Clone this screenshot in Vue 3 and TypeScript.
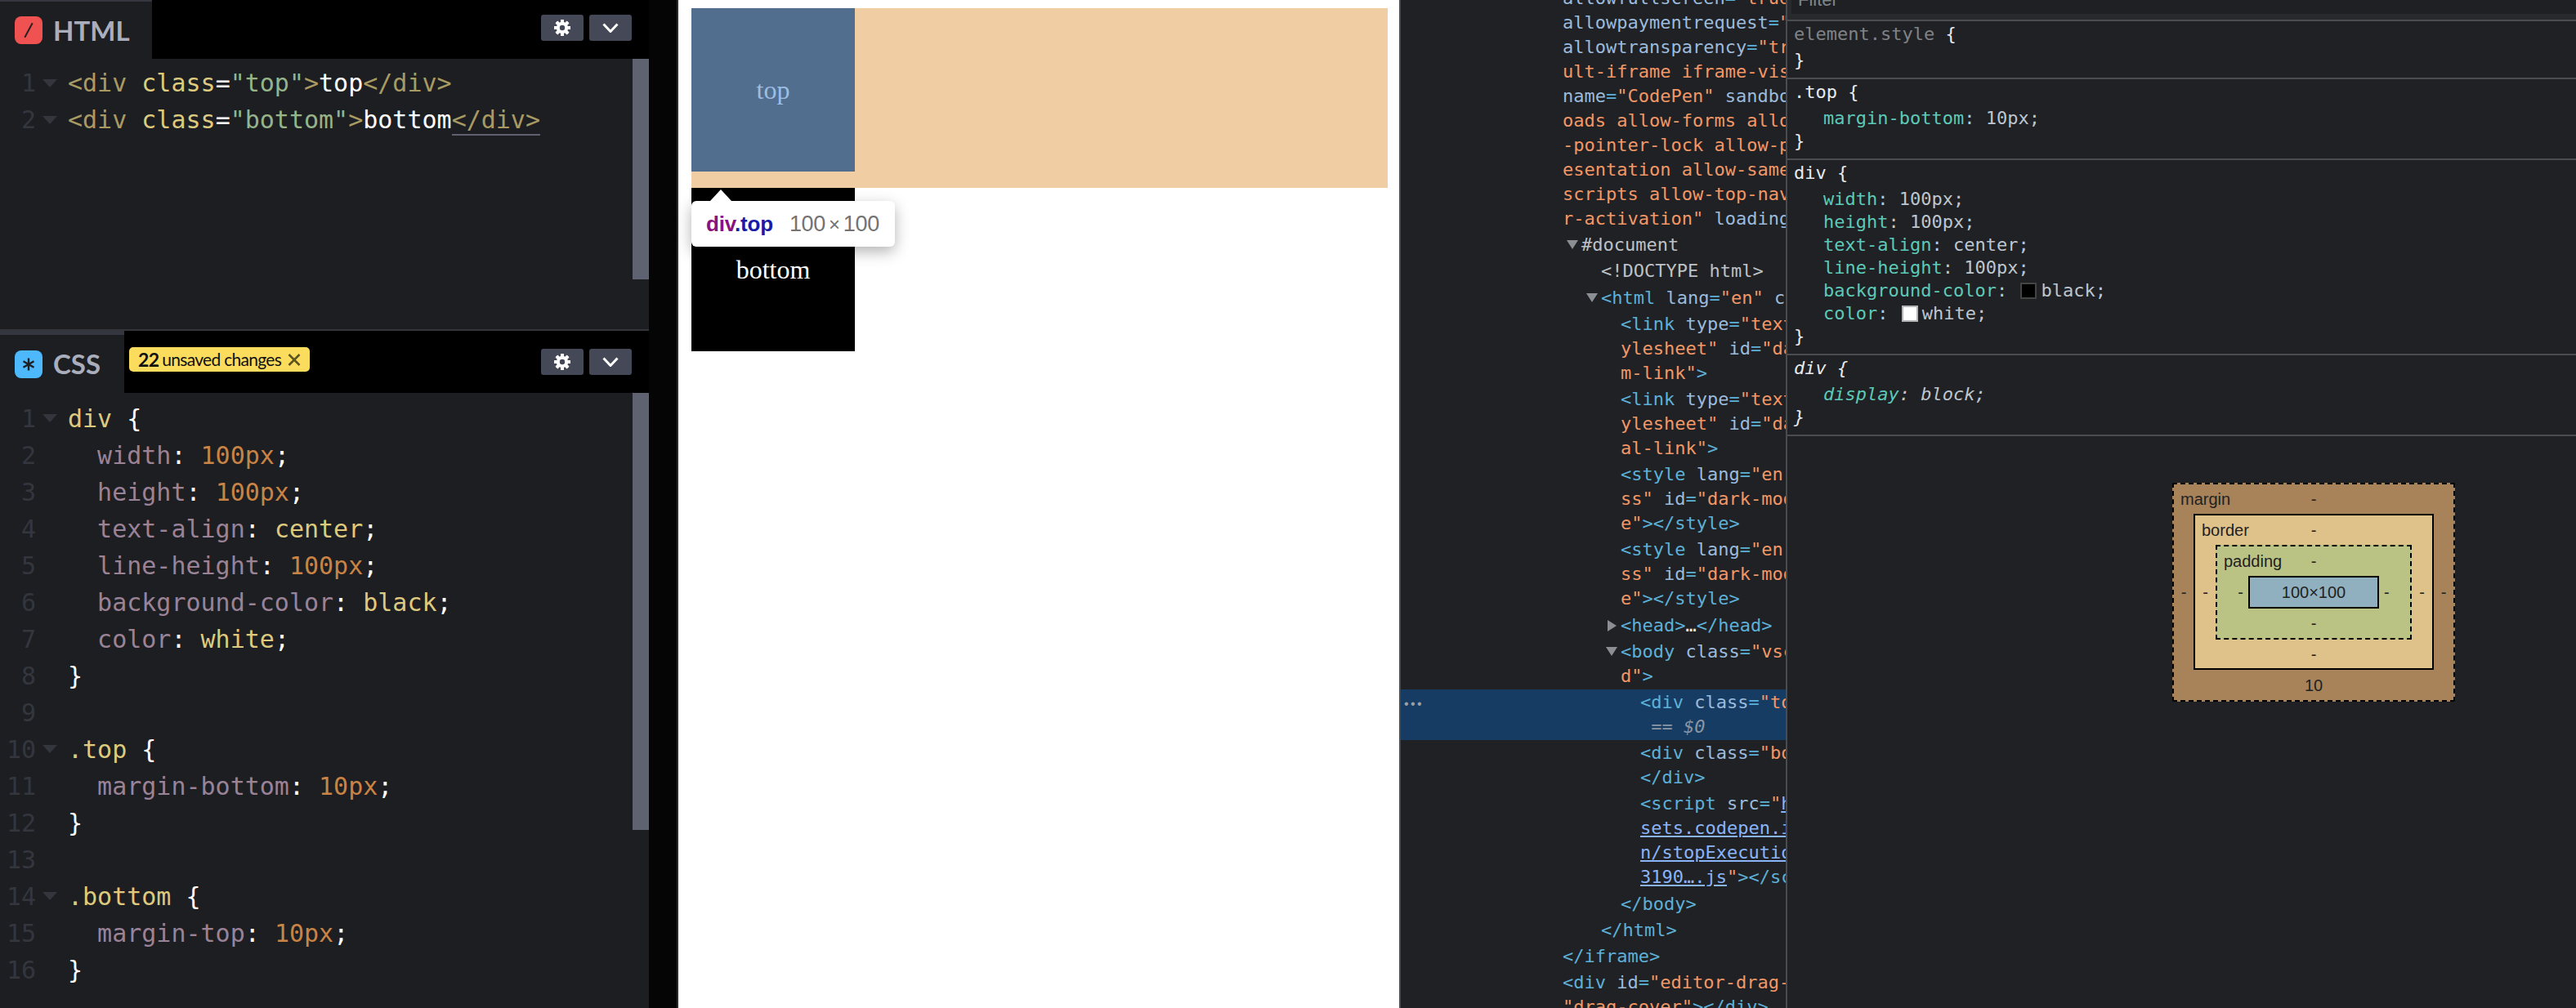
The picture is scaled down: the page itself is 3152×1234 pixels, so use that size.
<script setup lang="ts">
type Seg = { c: string; t: string }
const parse = (s: string): Seg[] => s.split('§').map((p) => ({ c: p[0], t: p.slice(1) }))

type CodeLine = { n: number; fold: boolean; segs: Seg[] }
const code = (rows: [boolean, string][]): CodeLine[] =>
  rows.map(([fold, s], i) => ({ n: i + 1, fold, segs: s ? parse(s) : [] }))

const htmlLines = code([
  [true, 't<div§w §aclass§w=§s"top"§t>§wtop§t</div>'],
  [true, 't<div§w §aclass§w=§s"bottom"§t>§wbottom§u</div>'],
])

const cssLines = code([
  [true, 'kdiv§w {'],
  [false, 'p  width§w: §n100px§w;'],
  [false, 'p  height§w: §n100px§w;'],
  [false, 'p  text-align§w: §kcenter§w;'],
  [false, 'p  line-height§w: §n100px§w;'],
  [false, 'p  background-color§w: §kblack§w;'],
  [false, 'p  color§w: §kwhite§w;'],
  [false, 'w}'],
  [false, ''],
  [true, 'k.top§w {'],
  [false, 'p  margin-bottom§w: §n10px§w;'],
  [false, 'w}'],
  [false, ''],
  [true, 'k.bottom§w {'],
  [false, 'p  margin-top§w: §n10px§w;'],
  [false, 'w}'],
])

const gearAngles = [0, 45, 90, 135, 180, 225, 270, 315]

type DomRow = { x: number; arrow?: 'down' | 'right'; sel?: boolean; lines: Seg[][] }
const row = (x: number, lines: string[], arrow?: 'down' | 'right', sel?: boolean): DomRow => ({
  x,
  arrow,
  sel,
  lines: lines.map(parse),
})

const domRows: DomRow[] = [
  row(1913, [
    'aallowfullscreen§b=§v"true',
    'aallowpaymentrequest§b=§v"',
    'aallowtransparency§b=§v"tr',
    'vult-iframe iframe-vis',
    'aname§b=§v"CodePen"§a sandbo',
    'voads allow-forms allo',
    'v-pointer-lock allow-p',
    'vesentation allow-same',
    'vscripts allow-top-nav',
    'vr-activation"§a loading',
  ]),
  row(1936, ['g#document'], 'down'),
  row(1960, ['d<!DOCTYPE html>']),
  row(1960, ['b<html§a lang§b=§v"en"§a c'], 'down'),
  row(1984, ['b<link§a type§b=§v"text', 'vylesheet"§a id§b=§v"da', 'vm-link"§b>']),
  row(1984, ['b<link§a type§b=§v"text', 'vylesheet"§a id§b=§v"da', 'val-link"§b>']),
  row(1984, ['b<style§a lang§b=§v"en"', 'vss"§a id§b=§v"dark-mod', 've"§b></style>']),
  row(1984, ['b<style§a lang§b=§v"en"', 'vss"§a id§b=§v"dark-mod', 've"§b></style>']),
  row(1984, ['b<head>§w…§b</head>'], 'right'),
  row(1984, ['b<body§a class§b=§v"vsc', 'vd"§b>'], 'down'),
  row(2008, ['b<div§a class§b=§v"to', 'm == §i$0'], undefined, true),
  row(2008, ['b<div§a class§b=§v"bo', 'b</div>']),
  row(2008, ['b<script§a src§b=§v"§lh', 'lsets.codepen.i', 'ln/stopExecutio', 'l3190….js§v"§b></sc']),
  row(1984, ['b</body>']),
  row(1960, ['b</html>']),
  row(1913, ['b</iframe>']),
  row(1913, ['b<div§a id§b=§v"editor-drag-', 'v"drag-cover"§b></div>']),
]
</script>

<template>
  <div class="page">
    <section class="editors">
      <div class="panel panel-html">
        <header class="head">
          <div class="tab tab-html">
            <span class="logo logo-html"><i class="slash"></i></span>
            <span class="tab-name">HTML</span>
          </div>
          <div class="actions">
            <button class="btn btn-gear" type="button">
              <svg width="20" height="20" viewBox="0 0 20 20">
                <rect v-for="a in gearAngles" :key="a" x="8" y="0" width="4" height="20" rx="0.6" fill="#fff" :transform="`rotate(${a} 10 10)`" />
                <circle cx="10" cy="10" r="7.2" fill="#fff" />
                <circle cx="10" cy="10" r="3.2" fill="#444857" />
              </svg>
            </button>
            <button class="btn btn-down" type="button">
              <svg width="20" height="12" viewBox="0 0 20 12"><path d="M1.5 1.5 10 10.5 18.5 1.5" fill="none" stroke="#fff" stroke-width="3" /></svg>
            </button>
          </div>
        </header>
        <div class="code">
          <div v-for="l in htmlLines" :key="l.n" class="line">
            <span class="gutter">{{ l.n }}</span>
            <span class="fold"><i v-if="l.fold" class="fold-mark"></i></span>
            <span class="src"><span v-for="(s, i) in l.segs" :key="i" :class="'c-' + s.c">{{ s.t }}</span></span>
          </div>
          <div class="scroll scroll-html"></div>
        </div>
      </div>

      <div class="panel panel-css">
        <header class="head">
          <div class="tab tab-css">
            <span class="logo logo-css">
              <svg width="18" height="18" viewBox="0 0 18 18"><path d="M9 1.5v15M2.5 5.2l13 7.6M15.5 5.2l-13 7.6" fill="none" stroke="#1d1e22" stroke-width="2.4" /></svg>
            </span>
            <span class="tab-name">CSS</span>
          </div>
          <div class="badge">
            <b>22</b><span>unsaved changes</span>
            <svg width="16" height="15" viewBox="0 0 16 15"><path d="M1.5 1 14.5 14M14.5 1 1.5 14" fill="none" stroke="#5d5320" stroke-width="2.5" /></svg>
          </div>
          <div class="actions">
            <button class="btn btn-gear" type="button">
              <svg width="20" height="20" viewBox="0 0 20 20">
                <rect v-for="a in gearAngles" :key="a" x="8" y="0" width="4" height="20" rx="0.6" fill="#fff" :transform="`rotate(${a} 10 10)`" />
                <circle cx="10" cy="10" r="7.2" fill="#fff" />
                <circle cx="10" cy="10" r="3.2" fill="#444857" />
              </svg>
            </button>
            <button class="btn btn-down" type="button">
              <svg width="20" height="12" viewBox="0 0 20 12"><path d="M1.5 1.5 10 10.5 18.5 1.5" fill="none" stroke="#fff" stroke-width="3" /></svg>
            </button>
          </div>
        </header>
        <div class="code">
          <div v-for="l in cssLines" :key="l.n" class="line">
            <span class="gutter">{{ l.n }}</span>
            <span class="fold"><i v-if="l.fold" class="fold-mark"></i></span>
            <span class="src"><span v-for="(s, i) in l.segs" :key="i" :class="'c-' + s.c">{{ s.t }}</span></span>
          </div>
          <div class="scroll scroll-css"></div>
        </div>
      </div>
    </section>

    <div class="gap"></div>

    <section class="preview">
      <div class="stage">
        <div class="box box-top-wrap">
          <div class="box box-top">top</div>
        </div>
        <div class="box box-bottom">bottom</div>
        <div class="tip">
          <i class="tip-arrow"></i>
          <span class="tip-name"><span class="tip-tag">div</span><span class="tip-cls">.top</span></span>
          <span class="tip-size">100<span class="tip-x">×</span>100</span>
        </div>
      </div>
    </section>

    <section class="dom">
      <div class="dom-inner">
        <div
          v-for="(r, ri) in domRows"
          :key="ri"
          class="dom-row"
          :class="{ selected: r.sel }"
          :style="{ paddingLeft: r.x - 1715 + 'px' }"
        >
          <span v-if="r.sel" class="dots">•••</span>
          <i v-if="r.arrow" class="arrow" :class="'arrow-' + r.arrow"></i>
          <div v-for="(l, li) in r.lines" :key="li" class="dom-line">
            <span v-for="(s, i) in l" :key="i" :class="'d-' + s.c">{{ s.t }}</span>
          </div>
        </div>
      </div>
    </section>

    <aside class="styles">
      <div class="filter-bar"><div class="filter-input">Filter</div></div>

      <div class="rule">
        <div class="sel muted">element.style <span class="brace">{</span></div>
        <div class="brace-end">}</div>
      </div>
      <div class="rule">
        <div class="sel">.top {</div>
        <div class="decl"><span class="prop">margin-bottom</span>: 10px;</div>
        <div class="brace-end">}</div>
      </div>
      <div class="rule">
        <div class="sel">div {</div>
        <div class="decl"><span class="prop">width</span>: 100px;</div>
        <div class="decl"><span class="prop">height</span>: 100px;</div>
        <div class="decl"><span class="prop">text-align</span>: center;</div>
        <div class="decl"><span class="prop">line-height</span>: 100px;</div>
        <div class="decl"><span class="prop">background-color</span>: <i class="swatch swatch-black"></i>black;</div>
        <div class="decl"><span class="prop">color</span>: <i class="swatch swatch-white"></i>white;</div>
        <div class="brace-end">}</div>
      </div>
      <div class="rule ua">
        <div class="sel">div {</div>
        <div class="decl"><span class="prop">display</span>: block;</div>
        <div class="brace-end">}</div>
      </div>

      <div class="bm bm-margin">
        <span class="bm-label">margin</span><span class="bm-top">-</span>
        <span class="bm-left">-</span>
        <div class="bm bm-border">
          <span class="bm-label">border</span><span class="bm-top">-</span>
          <span class="bm-left">-</span>
          <div class="bm bm-padding">
            <span class="bm-label">padding</span><span class="bm-top">-</span>
            <span class="bm-left">-</span>
            <div class="bm-content">100×100</div>
            <span class="bm-right">-</span>
            <span class="bm-bottom">-</span>
          </div>
          <span class="bm-right">-</span>
          <span class="bm-bottom">-</span>
        </div>
        <span class="bm-right">-</span>
        <span class="bm-bottom">10</span>
      </div>
    </aside>
  </div>
</template>

<style scoped>
.page {
  display: flex;
  width: 3152px;
  height: 1234px;
  overflow: hidden;
  background: #000;
}

/* editors */
.editors {
  display: flex;
  flex-direction: column;
  flex: none;
  width: 794px;
  height: 1234px;
}
.panel {
  display: flex;
  flex-direction: column;
}
.panel-html {
  height: 403px;
  border-bottom: 2px solid #34353b;
}
.panel-css {
  flex: 1;
  min-height: 0;
}
.head {
  display: flex;
  flex: none;
  align-items: center;
  background: #000;
}
.panel-html .head {
  height: 72px;
}
.panel-css .head {
  height: 76px;
}
.tab {
  display: flex;
  align-items: center;
  gap: 13px;
  align-self: stretch;
  padding-left: 18px;
  background: #1d1e22;
  box-sizing: border-box;
}
.tab-html {
  width: 186px;
  border-top: 2px solid #343640;
}
.tab-css {
  width: 152px;
  border-top: 5px solid #343640;
}
.logo {
  display: flex;
  align-items: center;
  justify-content: center;
  flex: none;
  width: 34px;
  height: 34px;
  border-radius: 8px;
  color: #1d1e22;
}
.logo-html {
  background: #f05252;
}
.slash {
  display: block;
  width: 2px;
  height: 20px;
  background: #2b2020;
  transform: rotate(28deg);
}
.logo-css {
  background: #4db8fb;
}
.tab-name {
  font: 700 33px/1 Lato, sans-serif;
  color: #aaaebc;
}
.badge {
  display: flex;
  align-items: center;
  flex: none;
  height: 30px;
  margin: -6px 0 0 6px;
  padding: 0 11px;
  border-radius: 5px;
  background: #fbdc5c;
  color: #111;
  font: 400 21px/30px Lato, sans-serif;
  letter-spacing: -0.7px;
}
.badge b {
  font-weight: 700;
  font-size: 23px;
  margin-right: 4px;
}
.badge svg {
  margin-left: 8px;
}
.actions {
  display: flex;
  gap: 7px;
  margin-left: auto;
  margin-right: 21px;
}
.panel-html .actions {
  margin-bottom: 4px;
}
.btn {
  display: flex;
  align-items: center;
  justify-content: center;
  width: 52px;
  height: 32px;
  padding: 0;
  border: 0;
  border-radius: 3px;
  background: #444857;
}
.code {
  position: relative;
  flex: 1;
  min-height: 0;
  padding-top: 8.5px;
  background: #1d1e22;
  overflow: hidden;
  font: 30px/45px "DejaVu Sans Mono", monospace;
}
.panel-html .code {
  padding-top: 7px;
}
.line {
  display: flex;
  height: 45px;
  white-space: pre;
}
.gutter {
  flex: none;
  width: 44px;
  text-align: right;
  color: #34363e;
}
.fold {
  display: flex;
  align-items: center;
  flex: none;
  width: 39px;
  padding-left: 8px;
  box-sizing: border-box;
}
.fold-mark {
  width: 0;
  height: 0;
  border-left: 9px solid transparent;
  border-right: 9px solid transparent;
  border-top: 10px solid #34363e;
}
.c-t { color: #a99a62; }
.c-u { color: #a99a62; box-shadow: 0 2px 0 #5f6170; }
.c-a, .c-k { color: #ddca7e; }
.c-w { color: #fff; }
.c-s { color: #96b38a; }
.c-p { color: #9a8297; }
.c-n { color: #c98344; }
.scroll {
  position: absolute;
  top: 0;
  right: 0;
  width: 20px;
  background: #5f6270;
}
.scroll-html { height: 270px; }
.scroll-css { height: 535px; }

.gap {
  flex: none;
  width: 36px;
  background: #050505;
  border-right: 2px solid #2c2c30;
  box-sizing: border-box;
}

/* preview */
.preview {
  flex: none;
  width: 884px;
  background: #fff;
  padding: 10px 0 0 16px;
  box-sizing: border-box;
}
.stage {
  position: relative;
  width: 852px;
}
.box {
  font: 32px/200px "Liberation Serif", serif;
  text-align: center;
}
.box-top-wrap {
  height: 220px;
  background: #f1cda3;
}
.box-top {
  width: 200px;
  height: 200px;
  background: #526e8f;
  color: #9dbde3;
}
.box-bottom {
  width: 200px;
  height: 200px;
  background: #000;
  color: #fff;
}
.tip {
  position: absolute;
  left: 0;
  top: 236px;
  display: flex;
  align-items: center;
  box-sizing: border-box;
  width: 249px;
  height: 56px;
  padding-left: 18px;
  border-radius: 6px;
  background: #fff;
  box-shadow: 0 6px 18px rgba(0, 0, 0, 0.3);
  font-family: "Liberation Sans", sans-serif;
}
.tip-arrow {
  position: absolute;
  left: 23px;
  top: -14px;
  width: 0;
  height: 0;
  border-left: 13px solid transparent;
  border-right: 13px solid transparent;
  border-bottom: 14px solid #fff;
}
.tip-name {
  font-size: 26px;
  font-weight: 700;
  letter-spacing: -0.2px;
}
.tip-tag { color: #881280; }
.tip-cls { color: #1a1aa6; }
.tip-size {
  margin-left: 20px;
  font-size: 27px;
  letter-spacing: -0.3px;
  color: #737373;
}
.tip-x {
  padding: 0 4px;
  font-size: 24px;
}

/* dom tree */
.dom {
  flex: none;
  width: 471px;
  height: 1234px;
  overflow: hidden;
  background: #202124;
  border-left: 2px solid #4a4c50;
  margin-left: -2px;
  box-sizing: content-box;
  font: 22px/30px "DejaVu Sans Mono", monospace;
}
.dom-inner {
  margin-top: -18px;
}
.dom-row {
  position: relative;
  padding-top: 1.1px;
  padding-bottom: 1.1px;
  white-space: pre;
}
.dom-row.selected {
  background: #173c64;
}
.dom-line {
  height: 30px;
  color: #bdc6cf;
}
.dots {
  position: absolute;
  left: 4px;
  top: 3px;
  color: #9aa0a6;
  font: 16px/30px "Liberation Sans", sans-serif;
  letter-spacing: 2.4px;
}
.arrow {
  position: absolute;
  width: 0;
  height: 0;
}
.arrow-down {
  margin-left: -18px;
  margin-top: 9px;
  border-left: 7px solid transparent;
  border-right: 7px solid transparent;
  border-top: 11px solid #8b8e92;
}
.arrow-right {
  margin-left: -16px;
  margin-top: 8px;
  border-top: 7px solid transparent;
  border-bottom: 7px solid transparent;
  border-left: 11px solid #8b8e92;
}
.d-a { color: #9bbbdc; }
.d-b { color: #5db0d7; }
.d-v { color: #f29766; }
.d-g, .d-d { color: #bdc1c6; }
.d-w { color: #e8eaed; }
.d-l { color: #8ab4f8; text-decoration: underline; }
.d-m { color: #8b96a3; }
.d-i { color: #8b96a3; font-style: italic; }

/* styles pane */
.styles {
  flex: 1;
  min-width: 0;
  height: 1234px;
  background: #202124;
  border-left: 2px solid #4a4c50;
  font: 22px/28px "DejaVu Sans Mono", monospace;
  color: #bdc6cf;
}
.filter-bar {
  height: 24px;
  padding-left: 5px;
  background: #292a2d;
  border-bottom: 2px solid #4a4c50;
}
.filter-input {
  height: 17px;
  padding-left: 8px;
  background: #1f2023;
  font: 22px/0 "Liberation Sans", sans-serif;
  color: #80868b;
}
.rule {
  padding-bottom: 7px;
  padding-left: 8px;
  border-bottom: 2px solid #4a4c50;
}
.sel {
  height: 32px;
  margin-bottom: 2px;
  line-height: 32px;
  color: #e8eaed;
}
.sel.muted {
  color: #808386;
}
.brace {
  color: #e8eaed;
}
.decl {
  height: 28px;
  padding-left: 36px;
}
.brace-end {
  height: 28px;
  color: #e8eaed;
}
.prop {
  color: #5dc9b8;
}
.ua {
  font-style: italic;
}
.swatch {
  display: inline-block;
  box-sizing: border-box;
  width: 20px;
  height: 20px;
  margin: 0 5px 0 3px;
  vertical-align: -3px;
  border: 2px solid;
}
.swatch-black {
  background: #000;
  border-color: #444;
}
.swatch-white {
  background: #fff;
  border-color: #b5b5b5;
}

/* box model */
.bm {
  display: grid;
  box-sizing: border-box;
  align-items: center;
  justify-items: center;
  color: #222;
  font: 20px/1 "Liberation Sans", sans-serif;
}
.bm-margin {
  width: 346px;
  height: 268px;
  margin: 57px 0 0 471px;
  grid-template-columns: 24px 1fr 24px;
  grid-template-rows: 36px 1fr 37px;
  background: #a88259;
  border: 2px dashed #000;
  border-radius: 2px;
}
.bm-border {
  grid-template-columns: 25px 1fr 25px;
  grid-template-rows: 36px 1fr 35px;
  background: #dfc18a;
  border: 2px solid #000;
}
.bm-padding {
  grid-template-columns: 38px 1fr 38px;
  grid-template-rows: 36px 1fr 36px;
  background: #bac384;
  border: 2px dashed #000;
}
.bm-label {
  grid-area: 1 / 1 / 2 / 4;
  justify-self: start;
  padding-left: 8px;
}
.bm-top {
  grid-area: 1 / 1 / 2 / 4;
}
.bm-left {
  grid-area: 2 / 1;
}
.bm-right {
  grid-area: 2 / 3;
}
.bm-bottom {
  grid-area: 3 / 1 / 4 / 4;
}
.bm-margin > .bm-border,
.bm-border > .bm-padding,
.bm-padding > .bm-content {
  grid-area: 2 / 2;
  justify-self: stretch;
  align-self: stretch;
}
.bm-padding > .bm-left {
  justify-self: end;
  margin-right: 6px;
}
.bm-padding > .bm-right {
  justify-self: start;
  margin-left: 6px;
}
.bm-content {
  display: flex;
  align-items: center;
  justify-content: center;
  height: 40px;
  box-sizing: border-box;
  background: #90b0bf;
  border: 2px solid #000;
}
</style>

<style>
html, body {
  margin: 0;
  background: #000;
}
</style>
